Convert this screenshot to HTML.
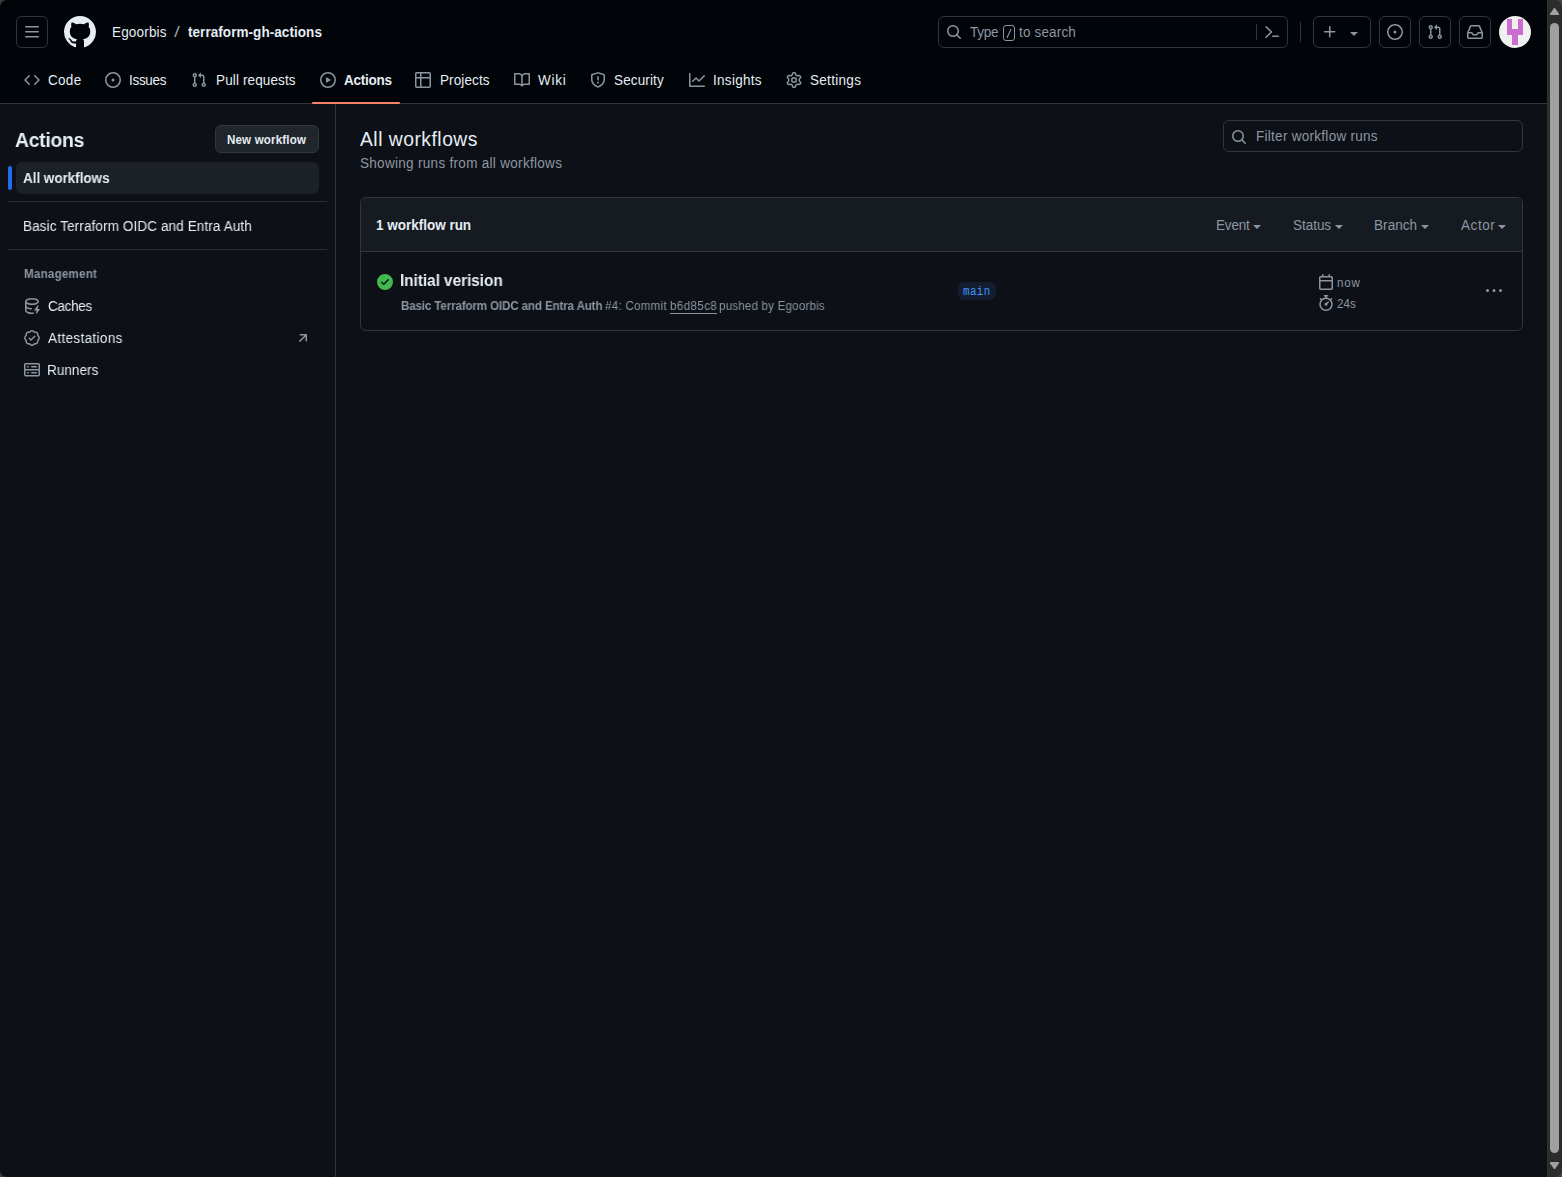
<!DOCTYPE html>
<html lang="en">
<head>
<meta charset="utf-8">
<title>Actions - Egoorbis/terraform-gh-actions</title>
<style>
*{box-sizing:border-box;margin:0;padding:0}
html,body{width:1562px;height:1177px;overflow:hidden;background:#0d1117}
body{position:relative;font-family:"Liberation Sans",sans-serif;font-size:14px;color:#e6edf3;line-height:20px}
.abs{position:absolute}
.t{position:absolute;white-space:nowrap;line-height:20px;height:20px;transform-origin:0 0}
svg{position:absolute;display:block;overflow:visible}
.hbtn{position:absolute;top:16px;width:32px;height:32px;border:1px solid #30363d;border-radius:6px}
#header{position:absolute;left:0;top:0;width:1547px;height:104px;background:#010409;border-bottom:1px solid #30363d}
#sbborder{position:absolute;left:335px;top:104px;width:1px;height:1073px;background:#30363d}
.hr{position:absolute;left:8px;width:319px;height:1px;background:#262c34}
</style>
</head>
<body>
<div id="header"></div>
<div class="abs" style="left:0;top:0;width:8px;height:8px;background:#3a3a3a"></div><div class="abs" style="left:0;top:0;width:16px;height:16px;background:#010409;border-top-left-radius:7px"></div>
<div class="hbtn" style="left:16px"></div>
<svg style="left:24px;top:24px" width="16" height="16" viewBox="0 0 16 16" fill="#8d96a0"><path d="M1 2.75A.75.75 0 0 1 1.75 2h12.5a.75.75 0 0 1 0 1.5H1.75A.75.75 0 0 1 1 2.75Zm0 5A.75.75 0 0 1 1.75 7h12.5a.75.75 0 0 1 0 1.5H1.75A.75.75 0 0 1 1 7.75ZM1.75 12h12.5a.75.75 0 0 1 0 1.5H1.75a.75.75 0 0 1 0-1.5Z"/></svg>
<svg style="left:64px;top:16px" width="32" height="32" viewBox="0 0 16 16" fill="#e6edf3"><path d="M8 0c4.42 0 8 3.58 8 8a8.013 8.013 0 0 1-5.45 7.59c-.4.08-.55-.17-.55-.38 0-.27.01-1.13.01-2.2 0-.75-.25-1.23-.54-1.48 1.78-.2 3.65-.88 3.65-3.95 0-.88-.31-1.59-.82-2.15.08-.2.36-1.02-.08-2.12 0 0-.67-.22-2.2.82-.64-.18-1.32-.27-2-.27-.68 0-1.36.09-2 .27-1.53-1.03-2.2-.82-2.2-.82-.44 1.1-.16 1.92-.08 2.12-.51.56-.82 1.28-.82 2.15 0 3.06 1.86 3.75 3.64 3.95-.23.2-.44.55-.51 1.07-.46.21-1.61.55-2.33-.66-.15-.24-.6-.83-1.23-.82-.67.01-.27.38.01.53.34.19.73.9.82 1.13.16.45.68 1.31 2.69.94 0 .67.01 1.3.01 1.49 0 .21-.15.45-.55.38A7.995 7.995 0 0 1 0 8c0-4.42 3.58-8 8-8Z"/></svg>
<svg style="left:24px;top:72px" width="16" height="16" viewBox="0 0 16 16" fill="#8d96a0"><path d="m11.28 3.22 4.25 4.25a.75.75 0 0 1 0 1.06l-4.25 4.25a.749.749 0 0 1-1.275-.326.749.749 0 0 1 .215-.734L13.94 8l-3.72-3.72a.749.749 0 0 1 .326-1.275.749.749 0 0 1 .734.215Zm-6.56 0a.751.751 0 0 1 1.042.018.751.751 0 0 1 .018 1.042L2.06 8l3.72 3.72a.749.749 0 0 1-.326 1.275.749.749 0 0 1-.734-.215L.47 8.53a.75.75 0 0 1 0-1.06Z"/></svg>
<svg style="left:105px;top:72px" width="16" height="16" viewBox="0 0 16 16" fill="#8d96a0"><path d="M8 9.5a1.5 1.5 0 1 0 0-3 1.5 1.5 0 0 0 0 3Z M8 0a8 8 0 1 1 0 16A8 8 0 0 1 8 0ZM1.5 8a6.5 6.5 0 1 0 13 0 6.5 6.5 0 0 0-13 0Z"/></svg>
<svg style="left:191px;top:72px" width="16" height="16" viewBox="0 0 16 16" fill="#8d96a0"><path d="M1.5 3.25a2.25 2.25 0 1 1 3 2.122v5.256a2.251 2.251 0 1 1-1.5 0V5.372A2.25 2.25 0 0 1 1.5 3.25Zm5.677-.177L9.573.677A.25.25 0 0 1 10 .854V2.5h1A2.5 2.5 0 0 1 13.5 5v5.628a2.251 2.251 0 1 1-1.5 0V5a1 1 0 0 0-1-1h-1v1.646a.25.25 0 0 1-.427.177L7.177 3.427a.25.25 0 0 1 0-.354ZM3.75 2.5a.75.75 0 1 0 0 1.5.75.75 0 0 0 0-1.5Zm0 9.5a.75.75 0 1 0 0 1.5.75.75 0 0 0 0-1.5Zm8.25.75a.75.75 0 1 0 1.5 0 .75.75 0 0 0-1.5 0Z"/></svg>
<svg style="left:320px;top:72px" width="16" height="16" viewBox="0 0 16 16" fill="#8d96a0"><path d="M8 0a8 8 0 1 1 0 16A8 8 0 0 1 8 0ZM1.5 8a6.5 6.5 0 1 0 13 0 6.5 6.5 0 0 0-13 0Zm4.879-2.773 4.264 2.559a.25.25 0 0 1 0 .428l-4.264 2.559A.25.25 0 0 1 6 10.559V5.442a.25.25 0 0 1 .379-.215Z"/></svg>
<svg style="left:415px;top:72px" width="16" height="16" viewBox="0 0 16 16" fill="#8d96a0"><path d="M0 1.75C0 .784.784 0 1.75 0h12.5C15.216 0 16 .784 16 1.75v12.5A1.75 1.75 0 0 1 14.25 16H1.75A1.75 1.75 0 0 1 0 14.25ZM6.5 6.5v8h7.75a.25.25 0 0 0 .25-.25V6.5Zm8-1.5V1.75a.25.25 0 0 0-.25-.25H6.5V5Zm-13 1.5v7.75c0 .138.112.25.25.25H5v-8ZM5 5V1.5H1.75a.25.25 0 0 0-.25.25V5Z"/></svg>
<svg style="left:514px;top:72px" width="16" height="16" viewBox="0 0 16 16" fill="#8d96a0"><path d="M0 1.75A.75.75 0 0 1 .75 1h4.253c1.227 0 2.317.59 3 1.501A3.743 3.743 0 0 1 11.006 1h4.245a.75.75 0 0 1 .75.75v10.5a.75.75 0 0 1-.75.75h-4.507a2.25 2.25 0 0 0-1.591.659l-.622.621a.75.75 0 0 1-1.06 0l-.622-.621A2.25 2.25 0 0 0 5.258 13H.75a.75.75 0 0 1-.75-.75Zm7.251 10.324.004-5.073-.002-2.253A2.25 2.25 0 0 0 5.003 2.5H1.5v9h3.757a3.75 3.75 0 0 1 1.994.574ZM8.755 4.75l-.004 7.322a3.752 3.752 0 0 1 1.992-.572H14.5v-9h-3.495a2.25 2.25 0 0 0-2.25 2.25Z"/></svg>
<svg style="left:590px;top:72px" width="16" height="16" viewBox="0 0 16 16" fill="#8d96a0"><path d="M7.467.133a1.748 1.748 0 0 1 1.066 0l5.25 1.68A1.75 1.75 0 0 1 15 3.48V7c0 1.566-.32 3.182-1.303 4.682-.983 1.498-2.585 2.813-5.032 3.855a1.697 1.697 0 0 1-1.33 0c-2.447-1.042-4.049-2.357-5.032-3.855C1.32 10.182 1 8.566 1 7V3.48a1.75 1.75 0 0 1 1.217-1.667Zm.61 1.429a.25.25 0 0 0-.153 0l-5.25 1.68a.25.25 0 0 0-.174.238V7c0 1.358.275 2.666 1.057 3.86.784 1.194 2.121 2.34 4.366 3.297a.196.196 0 0 0 .154 0c2.245-.956 3.582-2.104 4.366-3.298C13.225 9.666 13.5 8.36 13.5 7V3.48a.251.251 0 0 0-.174-.237l-5.25-1.68ZM8.75 4.75v3a.75.75 0 0 1-1.5 0v-3a.75.75 0 0 1 1.5 0ZM9 10.5a1 1 0 1 1-2 0 1 1 0 0 1 2 0Z"/></svg>
<svg style="left:689px;top:72px" width="16" height="16" viewBox="0 0 16 16" fill="#8d96a0"><path d="M1.5 1.75V13.5h13.75a.75.75 0 0 1 0 1.5H.75a.75.75 0 0 1-.75-.75V1.75a.75.75 0 0 1 1.5 0Zm14.28 2.53-5.25 5.25a.75.75 0 0 1-1.06 0L7 7.06 4.28 9.78a.751.751 0 0 1-1.042-.018.751.751 0 0 1-.018-1.042l3.25-3.25a.75.75 0 0 1 1.06 0L10 7.94l4.72-4.72a.751.751 0 0 1 1.042.018.751.751 0 0 1 .018 1.042Z"/></svg>
<svg style="left:786px;top:72px" width="16" height="16" viewBox="0 0 16 16" fill="#8d96a0"><path d="M8 0a8.2 8.2 0 0 1 .701.031C9.444.095 9.99.645 10.16 1.29l.288 1.107c.018.066.079.158.212.224.231.114.454.243.668.386.123.082.233.09.299.071l1.103-.303c.644-.176 1.392.021 1.82.63.27.385.506.792.704 1.218.315.675.111 1.422-.364 1.891l-.814.806c-.049.048-.098.147-.088.294.016.257.016.515 0 .772-.01.147.038.246.088.294l.814.806c.475.469.679 1.216.364 1.891a7.977 7.977 0 0 1-.704 1.217c-.428.61-1.176.807-1.82.63l-1.102-.302c-.067-.019-.177-.011-.3.071a5.909 5.909 0 0 1-.668.386c-.133.066-.194.158-.211.224l-.29 1.106c-.168.646-.715 1.196-1.458 1.26a8.006 8.006 0 0 1-1.402 0c-.743-.064-1.289-.614-1.458-1.26l-.289-1.106c-.018-.066-.079-.158-.212-.224a5.738 5.738 0 0 1-.668-.386c-.123-.082-.233-.09-.299-.071l-1.103.303c-.644.176-1.392-.021-1.82-.63a8.12 8.12 0 0 1-.704-1.218c-.315-.675-.111-1.422.363-1.891l.815-.806c.05-.048.098-.147.088-.294a6.214 6.214 0 0 1 0-.772c.01-.147-.038-.246-.088-.294l-.815-.806C.635 6.045.431 5.298.746 4.623a7.920 7.920 0 0 1 .704-1.217c.428-.61 1.176-.807 1.820-.63l1.102.302c.067.019.177.011.300-.071.214-.143.437-.272.668-.386.133-.066.194-.158.211-.224l.290-1.106C6.009.645 6.556.095 7.299.030 7.530.010 7.764 0 8 0Zm-.571 1.525c-.036.003-.108.036-.137.146l-.289 1.105c-.147.561-.549.967-.998 1.189-.173.086-.340.183-.500.290-.417.278-.970.423-1.529.270l-1.103-.303c-.109-.030-.175.016-.195.045-.220.312-.412.644-.573.990-.014.031-.021.110.059.190l.815.806c.411.406.562.957.530 1.456a4.709 4.709 0 0 0 0 .582c.032.499-.119 1.050-.530 1.456l-.815.806c-.081.080-.073.159-.059.190.162.346.353.677.573.989.020.030.085.076.195.046l1.102-.303c.560-.153 1.113-.008 1.530.270.161.107.328.204.501.290.447.222.850.629.997 1.189l.289 1.105c.029.109.101.143.137.146a6.600 6.600 0 0 0 1.142 0c.036-.003.108-.036.137-.146l.289-1.105c.147-.561.549-.967.998-1.189.173-.086.340-.183.500-.290.417-.278.970-.423 1.529-.270l1.103.303c.109.029.175-.016.195-.045.220-.313.411-.644.573-.990.014-.031.021-.110-.059-.190l-.815-.806c-.411-.406-.562-.957-.530-1.456a4.709 4.709 0 0 0 0-.582c-.032-.499.119-1.050.530-1.456l.815-.806c.081-.080.073-.159.059-.190a6.464 6.464 0 0 0-.573-.989c-.020-.030-.085-.076-.195-.046l-1.102.303c-.560.153-1.113.008-1.530-.270a4.440 4.440 0 0 0-.501-.290c-.447-.222-.850-.629-.997-1.189l-.289-1.105c-.029-.110-.101-.143-.137-.146a6.600 6.600 0 0 0-1.142 0ZM11 8a3 3 0 1 1-6 0 3 3 0 0 1 6 0ZM9.500 8a1.500 1.500 0 1 0-3.001.001A1.500 1.500 0 0 0 9.500 8Z"/></svg>
<div class="abs" style="left:312px;top:102px;width:88px;height:2px;background:#f78166;border-radius:1px"></div>
<div class="abs" style="left:938px;top:16px;width:350px;height:32px;border:1px solid #30363d;border-radius:6px"></div>
<svg style="left:946px;top:24px" width="16" height="16" viewBox="0 0 16 16" fill="#8d96a0"><path d="M10.68 11.74a6 6 0 0 1-7.922-8.982 6 6 0 0 1 8.982 7.922l3.040 3.040a.749.749 0 0 1-.326 1.275.749.749 0 0 1-.734-.215ZM11.500 7a4.499 4.499 0 1 0-8.997 0A4.499 4.499 0 0 0 11.500 7Z"/></svg>
<div class="abs" style="left:1003px;top:25px;width:12px;height:16px;border:1px solid #8d96a0;border-radius:3px"></div>
<svg style="left:1003px;top:25px" width="12" height="16" viewBox="0 0 12 16"><path d="M3.9 13 8.1 4" stroke="#8d96a0" stroke-width="1.1" fill="none"/></svg>
<div class="abs" style="left:1256px;top:24px;width:1px;height:16px;background:#30363d"></div>
<svg style="left:1264px;top:24px" width="16" height="16" viewBox="0 0 16 16" fill="#8d96a0"><path d="m6.354 8.040-4.773 4.773a.750.750 0 1 0 1.061 1.060L7.945 8.570a.750.750 0 0 0 0-1.060L2.642 2.206a.750.750 0 0 0-1.060 1.061L6.353 8.040ZM8.750 11.500a.750.750 0 0 0 0 1.500h5.500a.750.750 0 0 0 0-1.500h-5.500Z"/></svg>
<div class="abs" style="left:1300px;top:22px;width:1px;height:20px;background:#30363d"></div>
<div class="hbtn" style="left:1313px;width:58px"></div>
<svg style="left:1322px;top:24px" width="16" height="16" viewBox="0 0 16 16" fill="#8d96a0"><path d="M7.750 2a.750.750 0 0 1 .750.750V7h4.250a.750.750 0 0 1 0 1.500H8.500v4.250a.750.750 0 0 1-1.500 0V8.500H2.750a.750.750 0 0 1 0-1.500H7V2.750A.750.750 0 0 1 7.750 2Z"/></svg>
<svg style="left:1346px;top:25px" width="16" height="16" viewBox="0 0 16 16" fill="#8d96a0"><path d="m4.427 7.427 3.396 3.396a.250.250 0 0 0 .354 0l3.396-3.396A.250.250 0 0 0 11.396 7H4.604a.250.250 0 0 0-.177.427Z"/></svg>
<div class="hbtn" style="left:1379px"></div>
<svg style="left:1387px;top:24px" width="16" height="16" viewBox="0 0 16 16" fill="#8d96a0"><path d="M8 9.5a1.5 1.5 0 1 0 0-3 1.5 1.5 0 0 0 0 3Z M8 0a8 8 0 1 1 0 16A8 8 0 0 1 8 0ZM1.5 8a6.5 6.5 0 1 0 13 0 6.5 6.5 0 0 0-13 0Z"/></svg>
<div class="hbtn" style="left:1419px"></div>
<svg style="left:1427px;top:24px" width="16" height="16" viewBox="0 0 16 16" fill="#8d96a0"><path d="M1.5 3.25a2.25 2.25 0 1 1 3 2.122v5.256a2.251 2.251 0 1 1-1.5 0V5.372A2.25 2.25 0 0 1 1.5 3.25Zm5.677-.177L9.573.677A.25.25 0 0 1 10 .854V2.5h1A2.5 2.5 0 0 1 13.5 5v5.628a2.251 2.251 0 1 1-1.5 0V5a1 1 0 0 0-1-1h-1v1.646a.25.25 0 0 1-.427.177L7.177 3.427a.25.25 0 0 1 0-.354ZM3.75 2.5a.75.75 0 1 0 0 1.5.75.75 0 0 0 0-1.5Zm0 9.5a.75.75 0 1 0 0 1.5.75.75 0 0 0 0-1.5Zm8.25.75a.75.75 0 1 0 1.5 0 .75.75 0 0 0-1.5 0Z"/></svg>
<div class="hbtn" style="left:1459px"></div>
<svg style="left:1467px;top:24px" width="16" height="16" viewBox="0 0 16 16" fill="#8d96a0"><path d="M2.800 2.060A1.750 1.750 0 0 1 4.410 1h7.180c.700 0 1.333.417 1.610 1.060l2.740 6.395c.040.093.060.194.060.295v4.500A1.750 1.750 0 0 1 14.250 15H1.750A1.750 1.750 0 0 1 0 13.250v-4.500c0-.101.020-.202.060-.295Zm1.610.440a.250.250 0 0 0-.230.152L1.887 8H4.750a.750.750 0 0 1 .600.300L6.625 10h2.750l1.275-1.700a.750.750 0 0 1 .600-.300h2.863L11.820 2.652a.250.250 0 0 0-.230-.152Zm10.090 7h-2.875l-1.275 1.700a.750.750 0 0 1-.600.300h-3.500a.750.750 0 0 1-.600-.300L4.375 9.500H1.500v3.750c0 .138.112.250.250.250h12.500a.250.250 0 0 0 .250-.250Z"/></svg>
<svg style="left:1499px;top:16px" width="32" height="32" viewBox="0 0 32 32"><defs><clipPath id="av"><circle cx="16" cy="16" r="16"/></clipPath></defs><g clip-path="url(#av)"><rect width="32" height="32" fill="#f0f0f0"/><g fill="#cb6ccf" shape-rendering="crispEdges"><rect x="8.000" y="2.667" width="5.383" height="5.383"/><rect x="18.667" y="2.667" width="5.383" height="5.383"/><rect x="8.000" y="8.000" width="5.383" height="5.383"/><rect x="18.667" y="8.000" width="5.383" height="5.383"/><rect x="8.000" y="13.333" width="5.383" height="5.383"/><rect x="13.333" y="13.333" width="5.383" height="5.383"/><rect x="18.667" y="13.333" width="5.383" height="5.383"/><rect x="13.333" y="18.667" width="5.383" height="5.383"/><rect x="13.333" y="24.000" width="5.383" height="5.383"/></g></g></svg>
<div id="sbborder"></div>
<div class="abs" style="left:0;top:1170px;width:7px;height:7px;background:#3a3a3a"></div><div class="abs" style="left:0;top:1163px;width:14px;height:14px;background:#0d1117;border-bottom-left-radius:7px"></div>
<div class="abs" style="left:215px;top:125px;width:104px;height:28px;background:#21262d;border:1px solid #30363d;border-radius:6px"></div>
<div class="abs" style="left:16px;top:162px;width:303px;height:32px;background:#1c2128;border-radius:6px"></div>
<div class="abs" style="left:8px;top:166px;width:4px;height:24px;background:#1f6feb;border-radius:6px"></div>
<div class="hr" style="top:201px"></div>
<div class="hr" style="top:249px"></div>
<svg style="left:24px;top:298px" width="16" height="16" viewBox="0 0 16 16" fill="#8d96a0"><path d="M2.500 5.724V8c0 .248.238.700 1.169 1.159.874.430 2.144.745 3.620.822a.750.750 0 1 1-.078 1.498c-1.622-.085-3.102-.432-4.204-.975a5.565 5.565 0 0 1-.507-.280V12.500c0 .133.058.318.282.551.227.237.591.483 1.101.707 1.015.447 2.470.742 4.117.742.406 0 .802-.018 1.183-.052a.751.751 0 1 1 .134 1.494C8.890 15.980 8.450 16 8 16c-1.805 0-3.475-.320-4.721-.869-.623-.274-1.173-.619-1.579-1.041-.408-.425-.700-.964-.700-1.590v-9c0-.626.292-1.165.700-1.591.406-.420.956-.766 1.579-1.040C4.525.320 6.195 0 8 0c1.806 0 3.476.320 4.721.869.623.274 1.173.619 1.579 1.041.408.425.700.964.700 1.590 0 .626-.292 1.165-.700 1.591-.406.420-.956.766-1.578 1.040C11.475 6.680 9.805 7 8 7c-1.805 0-3.475-.320-4.721-.869a6.150 6.150 0 0 1-.779-.407Zm0-2.224c0 .133.058.318.282.551.227.237.591.483 1.101.707C4.898 5.205 6.353 5.500 8 5.500c1.646 0 3.101-.295 4.118-.742.508-.224.873-.471 1.100-.708.224-.232.282-.417.282-.550 0-.133-.058-.318-.282-.551-.227-.237-.591-.483-1.101-.707C11.102 1.795 9.647 1.500 8 1.500c-1.646 0-3.101.295-4.118.742-.508.224-.873.471-1.100.708-.224.232-.282.417-.282.550Z M14.490 7.582a.375.375 0 0 0-.660-.313l-3.625 4.625a.375.375 0 0 0 .295.606h2.127l-.619 2.922a.375.375 0 0 0 .666.304l3.125-4.125A.375.375 0 0 0 15.500 11h-1.778l.769-3.418Z"/></svg>
<svg style="left:24px;top:330px" width="16" height="16" viewBox="0 0 16 16" fill="#8d96a0"><path d="m9.585.520.929.680c.153.112.331.186.518.215l1.138.175a2.678 2.678 0 0 1 2.240 2.240l.174 1.139c.029.187.103.365.215.518l.680.928a2.677 2.677 0 0 1 0 3.170l-.680.928a1.174 1.174 0 0 0-.215.518l-.175 1.138a2.678 2.678 0 0 1-2.241 2.241l-1.138.175a1.170 1.170 0 0 0-.518.215l-.928.680a2.677 2.677 0 0 1-3.170 0l-.928-.680a1.174 1.174 0 0 0-.518-.215L3.830 14.410a2.678 2.678 0 0 1-2.240-2.240l-.175-1.138a1.170 1.170 0 0 0-.215-.518l-.680-.928a2.677 2.677 0 0 1 0-3.170l.680-.928c.112-.153.186-.331.215-.518l.175-1.140a2.678 2.678 0 0 1 2.240-2.240l1.139-.175c.187-.029.365-.103.518-.215l.928-.680a2.677 2.677 0 0 1 3.170 0ZM7.303 1.728l-.927.680a2.670 2.670 0 0 1-1.180.489l-1.137.174a1.179 1.179 0 0 0-.987.987l-.174 1.136a2.677 2.677 0 0 1-.489 1.180l-.680.928a1.180 1.180 0 0 0 0 1.394l.680.927c.256.348.424.753.489 1.180l.174 1.137c.078.509.478.909.987.987l1.136.174a2.670 2.670 0 0 1 1.180.489l.928.680c.414.305.979.305 1.394 0l.927-.680a2.670 2.670 0 0 1 1.180-.489l1.137-.174a1.180 1.180 0 0 0 .987-.987l.174-1.136a2.670 2.670 0 0 1 .489-1.180l.680-.928a1.176 1.176 0 0 0 0-1.394l-.680-.927a2.686 2.686 0 0 1-.489-1.180l-.174-1.137a1.179 1.179 0 0 0-.987-.987l-1.136-.174a2.677 2.677 0 0 1-1.180-.489l-.928-.680a1.176 1.176 0 0 0-1.394 0ZM11.280 6.780l-3.750 3.750a.750.750 0 0 1-1.060 0L4.720 8.780a.751.751 0 0 1 .018-1.042.751.751 0 0 1 1.042-.018L7 8.940l3.220-3.220a.751.751 0 0 1 1.042.018.751.751 0 0 1 .018 1.042Z"/></svg>
<svg style="left:24px;top:362px" width="16" height="16" viewBox="0 0 16 16" fill="#8d96a0"><path d="M1.750 1h12.500c.966 0 1.750.784 1.750 1.750v4c0 .372-.116.717-.314 1 .198.283.314.628.314 1v4a1.750 1.750 0 0 1-1.750 1.750H1.750A1.750 1.750 0 0 1 0 12.750v-4c0-.358.109-.707.314-1a1.739 1.739 0 0 1-.314-1v-4C0 1.784.784 1 1.750 1ZM1.500 2.750v4c0 .138.112.250.250.250h12.500a.250.250 0 0 0 .250-.250v-4a.250.250 0 0 0-.250-.250H1.750a.250.250 0 0 0-.250.250Zm.250 5.750a.250.250 0 0 0-.250.250v4c0 .138.112.250.250.250h12.500a.250.250 0 0 0 .250-.250v-4a.250.250 0 0 0-.250-.250ZM7 4.750A.750.750 0 0 1 7.750 4h4.500a.750.750 0 0 1 0 1.500h-4.500A.750.750 0 0 1 7 4.750ZM7.750 10h4.500a.750.750 0 0 1 0 1.500h-4.500a.750.750 0 0 1 0-1.500ZM3 4.750A.750.750 0 0 1 3.750 4h.500a.750.750 0 0 1 0 1.500h-.500A.750.750 0 0 1 3 4.750ZM3.750 10h.500a.750.750 0 0 1 0 1.500h-.500a.750.750 0 0 1 0-1.500Z"/></svg>
<svg style="left:295px;top:330px" width="16" height="16" viewBox="0 0 16 16" fill="#8d96a0"><path d="M4.530 4.750A.750.750 0 0 1 5.280 4h6.010a.750.750 0 0 1 .750.750v6.010a.750.750 0 0 1-1.500 0v-4.200l-5.260 5.260a.749.749 0 0 1-1.275-.326.749.749 0 0 1 .215-.734L9.480 5.500h-4.200a.750.750 0 0 1-.750-.750Z"/></svg>
<div class="abs" style="left:1223px;top:120px;width:300px;height:32px;border:1px solid #30363d;border-radius:6px"></div>
<svg style="left:1231px;top:129px" width="16" height="16" viewBox="0 0 16 16" fill="#8d96a0"><path d="M10.68 11.74a6 6 0 0 1-7.922-8.982 6 6 0 0 1 8.982 7.922l3.040 3.040a.749.749 0 0 1-.326 1.275.749.749 0 0 1-.734-.215ZM11.500 7a4.499 4.499 0 1 0-8.997 0A4.499 4.499 0 0 0 11.500 7Z"/></svg>
<div class="abs" style="left:360px;top:197px;width:1163px;height:134px;border:1px solid #30363d;border-radius:6px;overflow:hidden"><div style="height:54px;background:#161b22;border-bottom:1px solid #30363d"></div></div>
<div class="abs" style="left:1253px;top:224.5px;width:0;height:0;border-left:4px solid transparent;border-right:4px solid transparent;border-top:4px solid #8d96a0"></div>
<div class="abs" style="left:1335px;top:224.5px;width:0;height:0;border-left:4px solid transparent;border-right:4px solid transparent;border-top:4px solid #8d96a0"></div>
<div class="abs" style="left:1421px;top:224.5px;width:0;height:0;border-left:4px solid transparent;border-right:4px solid transparent;border-top:4px solid #8d96a0"></div>
<div class="abs" style="left:1498px;top:224.5px;width:0;height:0;border-left:4px solid transparent;border-right:4px solid transparent;border-top:4px solid #8d96a0"></div>
<svg style="left:377px;top:274px" width="16" height="16" viewBox="0 0 16 16" fill="#3fb950"><path d="M8 16A8 8 0 1 1 8 0a8 8 0 0 1 0 16Zm3.780-9.720a.751.751 0 0 0-.018-1.042.751.751 0 0 0-1.042-.018L6.750 9.190 5.280 7.720a.751.751 0 0 0-1.042.018.751.751 0 0 0-.018 1.042l2 2a.750.750 0 0 0 1.060 0Z"/></svg>
<div class="abs" style="left:958px;top:282px;width:38px;height:18px;background:#121d2f;border-radius:6px"></div>
<svg style="left:1318px;top:274px" width="16" height="16" viewBox="0 0 16 16" fill="#8d96a0"><path d="M4.750 0a.750.750 0 0 1 .750.750V2h5V.750a.750.750 0 0 1 1.500 0V2h1.250c.966 0 1.750.784 1.750 1.750v10.500A1.750 1.750 0 0 1 13.250 16H2.750A1.750 1.750 0 0 1 1 14.250V3.750C1 2.784 1.784 2 2.750 2H4V.750A.750.750 0 0 1 4.750 0ZM2.500 7.500v6.750c0 .138.112.250.250.250h10.500a.250.250 0 0 0 .250-.250V7.500Zm10.750-4H2.750a.250.250 0 0 0-.250.250V6h11V3.750a.250.250 0 0 0-.250-.250Z"/></svg>
<svg style="left:1318px;top:295px" width="16" height="16" viewBox="0 0 16 16" fill="#8d96a0"><path d="M5.750.750A.750.750 0 0 1 6.500 0h3a.750.750 0 0 1 0 1.500h-.750v1l-.001.041a6.724 6.724 0 0 1 3.464 1.435l.007-.006.750-.750a.749.749 0 0 1 1.275.326.749.749 0 0 1-.215.734l-.750.750-.006.007a6.750 6.750 0 1 1-10.548 0L2.720 5.030l-.750-.750a.751.751 0 0 1 .018-1.042.751.751 0 0 1 1.042-.018l.750.750.007.006A6.720 6.720 0 0 1 7.250 2.541V1.500H6.500a.750.750 0 0 1-.750-.750ZM8 14.500a5.250 5.250 0 1 0-.001-10.501A5.250 5.250 0 0 0 8 14.500Zm.389-6.700 1.330-1.330a.750.750 0 1 1 1.061 1.060L9.450 8.861A1.503 1.503 0 0 1 8 10.750a1.499 1.499 0 1 1 .389-2.950Z"/></svg>
<svg style="left:1486px;top:283px" width="16" height="16" viewBox="0 0 16 16" fill="#8d96a0"><path d="M8 9a1.500 1.500 0 1 0 0-3 1.500 1.500 0 0 0 0 3ZM1.500 9a1.500 1.500 0 1 0 0-3 1.500 1.500 0 0 0 0 3Zm13 0a1.500 1.500 0 1 0 0-3 1.500 1.500 0 0 0 0 3Z"/></svg>
<span class="t" id="t_owner" style="left:112.20px;top:22px;font-size:14.0px;color:#e6edf3;transform:scaleX(0.965);letter-spacing:0.176px;">Egoorbis</span>
<span class="t" id="t_slash" style="left:174.30px;top:22px;font-size:15px;color:#8d96a0;transform:scaleX(1.4);">/</span>
<span class="t" id="t_repo" style="left:188.38px;top:22px;font-size:14.0px;color:#e6edf3;transform:scaleX(0.965);font-weight:bold;letter-spacing:0.056px;">terraform-gh-actions</span>
<span class="t" id="t_code" style="left:47.80px;top:70px;font-size:14.0px;color:#e6edf3;transform:scaleX(0.965);letter-spacing:0.292px;">Code</span>
<span class="t" id="t_issues" style="left:128.80px;top:70px;font-size:14.0px;color:#e6edf3;transform:scaleX(0.965);letter-spacing:-0.315px;">Issues</span>
<span class="t" id="t_pulls" style="left:215.76px;top:70px;font-size:14.0px;color:#e6edf3;transform:scaleX(0.965);letter-spacing:0.127px;">Pull requests</span>
<span class="t" id="t_actions" style="left:343.52px;top:70px;font-size:14.0px;color:#e6edf3;transform:scaleX(0.965);font-weight:bold;letter-spacing:-0.243px;">Actions</span>
<span class="t" id="t_projects" style="left:439.62px;top:70px;font-size:14.0px;color:#e6edf3;transform:scaleX(0.965);letter-spacing:0.113px;">Projects</span>
<span class="t" id="t_wiki" style="left:538.24px;top:70px;font-size:14.0px;color:#e6edf3;transform:scaleX(0.965);letter-spacing:0.789px;">Wiki</span>
<span class="t" id="t_security" style="left:614.30px;top:70px;font-size:14.0px;color:#e6edf3;transform:scaleX(0.965);letter-spacing:0.142px;">Security</span>
<span class="t" id="t_insights" style="left:712.93px;top:70px;font-size:14.0px;color:#e6edf3;transform:scaleX(0.965);letter-spacing:0.302px;">Insights</span>
<span class="t" id="t_settings" style="left:810.12px;top:70px;font-size:14.0px;color:#e6edf3;transform:scaleX(0.965);letter-spacing:0.311px;">Settings</span>
<span class="t" id="t_type" style="left:969.78px;top:22px;font-size:14.0px;color:#8d96a0;transform:scaleX(0.965);letter-spacing:-0.297px;">Type</span>
<span class="t" id="t_tosearch" style="left:1019.06px;top:22px;font-size:14.0px;color:#8d96a0;transform:scaleX(0.965);letter-spacing:0.170px;">to search</span>
<span class="t" id="t_sb_h" style="left:15.25px;top:130px;font-size:20.0px;color:#e6edf3;transform:scaleX(0.965);font-weight:bold;letter-spacing:-0.261px;will-change:transform;">Actions</span>
<span class="t" id="t_sb_new" style="left:227.32px;top:130px;font-size:12.0px;color:#e6edf3;transform:scaleX(0.965);font-weight:bold;letter-spacing:0.163px;">New workflow</span>
<span class="t" id="t_sb_all" style="left:23.46px;top:168px;font-size:14.0px;color:#e6edf3;transform:scaleX(0.965);font-weight:bold;letter-spacing:-0.045px;will-change:transform;">All workflows</span>
<span class="t" id="t_sb_wf" style="left:23.01px;top:216px;font-size:14.0px;color:#e6edf3;transform:scaleX(0.965);letter-spacing:0.115px;will-change:transform;">Basic Terraform OIDC and Entra Auth</span>
<span class="t" id="t_sb_mgmt" style="left:23.54px;top:264px;font-size:12.0px;color:#8d96a0;transform:scaleX(0.965);font-weight:bold;letter-spacing:0.240px;will-change:transform;">Management</span>
<span class="t" id="t_sb_caches" style="left:47.53px;top:296px;font-size:14.0px;color:#e6edf3;transform:scaleX(0.965);letter-spacing:-0.333px;will-change:transform;">Caches</span>
<span class="t" id="t_sb_att" style="left:48.06px;top:328px;font-size:14.0px;color:#e6edf3;transform:scaleX(0.965);letter-spacing:0.351px;will-change:transform;">Attestations</span>
<span class="t" id="t_sb_run" style="left:47.42px;top:360px;font-size:14.0px;color:#e6edf3;transform:scaleX(0.965);letter-spacing:0.043px;will-change:transform;">Runners</span>
<span class="t" id="t_m_h" style="left:360.01px;top:129px;font-size:20.0px;color:#e6edf3;transform:scaleX(0.965);letter-spacing:0.510px;">All workflows</span>
<span class="t" id="t_m_sub" style="left:359.57px;top:153px;font-size:14.0px;color:#8d96a0;transform:scaleX(0.965);letter-spacing:0.309px;">Showing runs from all workflows</span>
<span class="t" id="t_m_filter" style="left:1256.31px;top:126px;font-size:14.0px;color:#8d96a0;transform:scaleX(0.965);letter-spacing:0.285px;">Filter workflow runs</span>
<span class="t" id="t_m_count" style="left:375.92px;top:215px;font-size:14.0px;color:#e6edf3;transform:scaleX(0.965);font-weight:bold;letter-spacing:-0.017px;">1 workflow run</span>
<span class="t" id="t_m_event" style="left:1215.53px;top:215px;font-size:14.0px;color:#8d96a0;transform:scaleX(0.965);letter-spacing:-0.174px;">Event</span>
<span class="t" id="t_m_status" style="left:1292.92px;top:215px;font-size:14.0px;color:#8d96a0;transform:scaleX(0.965);letter-spacing:-0.037px;">Status</span>
<span class="t" id="t_m_branch" style="left:1373.91px;top:215px;font-size:14.0px;color:#8d96a0;transform:scaleX(0.965);letter-spacing:0.061px;">Branch</span>
<span class="t" id="t_m_actor" style="left:1460.86px;top:215px;font-size:14.0px;color:#8d96a0;transform:scaleX(0.965);letter-spacing:0.591px;">Actor</span>
<span class="t" id="t_r_title" style="left:400.36px;top:270.5px;font-size:16.0px;color:#e6edf3;transform:scaleX(0.965);font-weight:bold;letter-spacing:-0.076px;will-change:transform;">Initial verision</span>
<span class="t" id="t_r_wf" style="left:401.28px;top:295.5px;font-size:12.0px;color:#8d96a0;transform:scaleX(0.965);font-weight:bold;letter-spacing:-0.134px;will-change:transform;">Basic Terraform OIDC and Entra Auth</span>
<span class="t" id="t_r_num" style="left:604.82px;top:295.5px;font-size:12.0px;color:#8d96a0;transform:scaleX(0.965);letter-spacing:0.284px;will-change:transform;">#4: Commit</span>
<span class="t" id="t_r_sha" style="left:669.81px;top:295.5px;font-size:12.0px;color:#8d96a0;transform:scaleX(0.965);letter-spacing:0.412px;text-decoration:underline;text-underline-offset:3px;will-change:transform;">b6d85c8</span>
<span class="t" id="t_r_push" style="left:718.86px;top:295.5px;font-size:12.0px;color:#8d96a0;transform:scaleX(0.965);letter-spacing:0.203px;will-change:transform;">pushed by Egoorbis</span>
<span class="t" id="t_main" style="left:963.37px;top:282px;font-size:12.0px;color:#4493f8;transform:scaleX(0.9);letter-spacing:0.451px;font-family:'Liberation Mono',monospace;">main</span>
<span class="t" id="t_r_now" style="left:1336.79px;top:272.5px;font-size:12.0px;color:#8d96a0;transform:scaleX(0.965);letter-spacing:0.821px;">now</span>
<span class="t" id="t_r_dur" style="left:1337.49px;top:293.5px;font-size:12.0px;color:#8d96a0;transform:scaleX(0.965);letter-spacing:0.008px;">24s</span>
<div class="abs" style="left:1547px;top:0;width:15px;height:1177px;background:#2c2c2c;border-left:1px solid #323232"></div>
<div class="abs" style="left:1555px;top:0;width:7px;height:7px;background:#444"></div><div class="abs" style="left:1548px;top:0;width:14px;height:14px;background:#2c2c2c;border-top-right-radius:7px"></div>
<div class="abs" style="left:1555px;top:1170px;width:7px;height:7px;background:#444"></div><div class="abs" style="left:1548px;top:1163px;width:14px;height:14px;background:#2c2c2c;border-bottom-right-radius:7px"></div>
<div class="abs" style="left:1550px;top:23px;width:9px;height:1130px;background:#9f9f9f;border-radius:4.5px"></div>
<svg style="left:1547px;top:0" width="15" height="1177" viewBox="0 0 15 1177" fill="#a0a0a0"><path d="M6.7 8.500Q7.500 7.400 8.300 8.500L12 13.800Q12.600 15.100 11.300 15.100H3.700Q2.400 15.100 3 13.800Z"/><path d="M6.700 1168.400Q7.500 1169.500 8.300 1168.400L12 1163.300Q12.600 1162 11.300 1162H3.700Q2.400 1162 3 1163.300Z"/></svg>
</body>
</html>
